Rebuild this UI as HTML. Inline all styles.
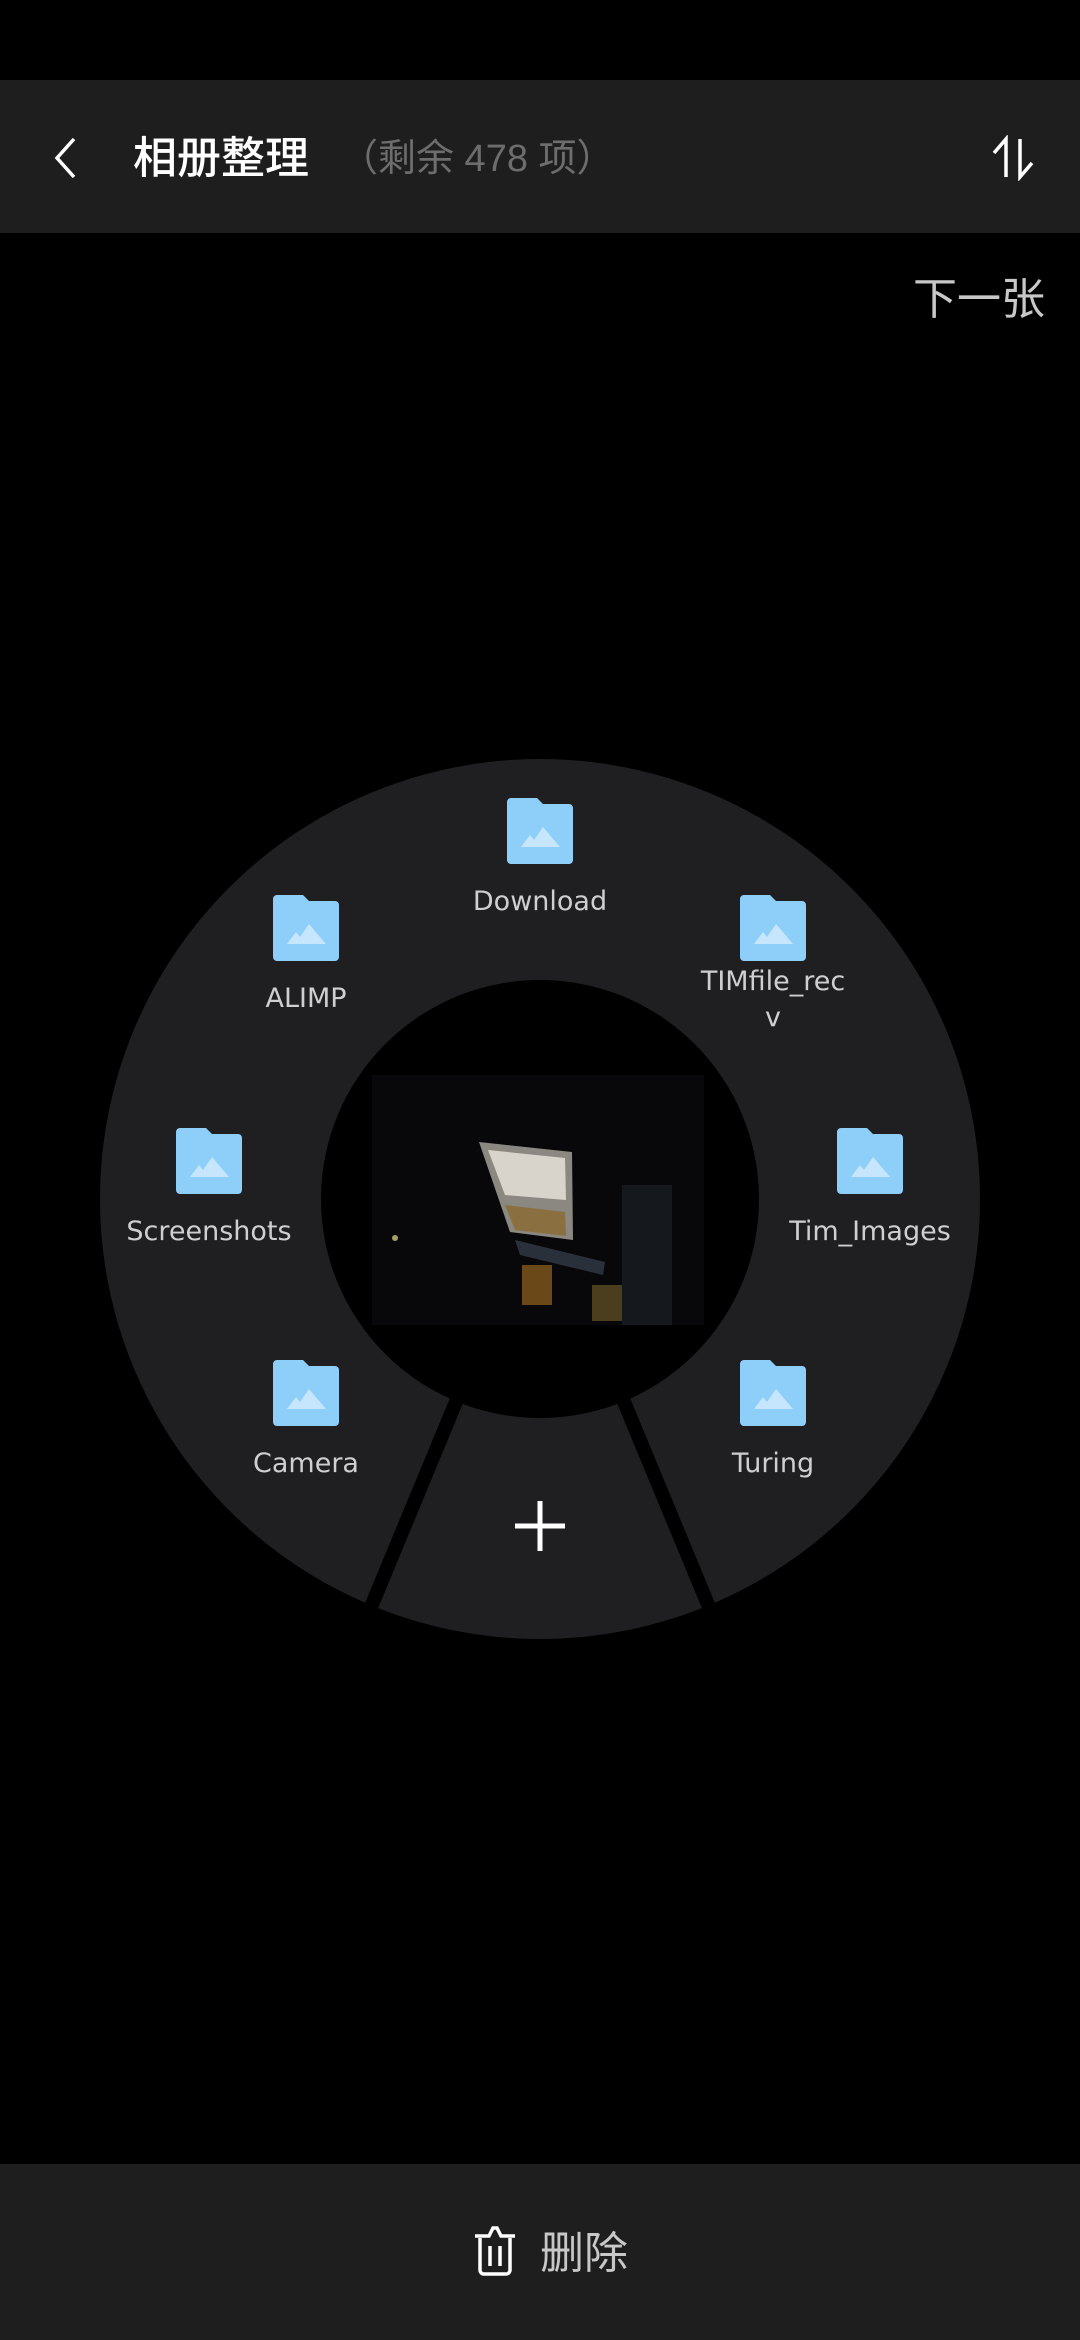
<!DOCTYPE html>
<html><head><meta charset="utf-8">
<style>
html,body{margin:0;padding:0;background:#000;}
body{width:1080px;height:2340px;position:relative;overflow:hidden;font-family:"Liberation Sans","Noto Sans CJK SC",sans-serif;}
.hdr{position:absolute;left:0;top:80px;width:1080px;height:153px;background:#1e1e1f;}
.t{position:absolute;white-space:nowrap;line-height:1;}
.bot{position:absolute;left:0;top:2164px;width:1080px;height:176px;background:#1e1e1f;}
.lbl{position:absolute;width:240px;text-align:center;color:#cfcfd0;font-size:27px;line-height:36px;font-family:"DejaVu Sans","Liberation Sans",sans-serif;}
.fd{position:absolute;width:66px;height:66px;}
</style></head><body>
<div class="hdr">
  <svg style="position:absolute;left:52px;top:57px" width="26" height="42" viewBox="0 0 26 42"><path d="M22 2 L5 21 L22 40" fill="none" stroke="#fff" stroke-width="3.5"/></svg>
  <div class="t" style="left:133px;top:52px;font-size:44px;color:#fff;font-weight:500;font-family:'Noto Sans CJK SC',sans-serif;">相册整理</div>
  <div class="t" style="left:340px;top:60px;font-size:38px;color:#6d6d6d;">（剩余 478 项）</div>
  <svg style="position:absolute;left:990px;top:55px" width="46" height="46" viewBox="0 0 46 46"><path d="M16 42 V4 L4 18 M30 4 V42 L42 28" fill="none" stroke="#fff" stroke-width="3.5"/></svg>
</div>
<div class="t" style="left:913px;top:278px;font-size:44px;color:#c8c8c8;">下一张</div>

<svg style="position:absolute;left:0;top:0" width="1080" height="2340">
  <circle cx="540" cy="1199" r="440" fill="#1f1f21"/>
  <line x1="540" y1="1199" x2="366" y2="1619" stroke="#000" stroke-width="14"/>
  <line x1="540" y1="1199" x2="714" y2="1619" stroke="#000" stroke-width="14"/>
  <circle cx="540" cy="1199" r="219" fill="#000"/>
  <rect x="372" y="1075" width="332" height="250" fill="#08080a"/>
  <polygon points="479,1142 572,1152 573,1240 510,1232" fill="#8a8880"/>
  <polygon points="488,1150 565,1158 566,1200 505,1195" fill="#d8d4cc"/>
  <polygon points="505,1205 565,1212 566,1236 515,1230" fill="#8a7040"/>
  <polygon points="515,1240 605,1262 603,1275 520,1255" fill="#2a303a"/>
  <rect x="522" y="1265" width="30" height="40" fill="#6a4818"/>
  <rect x="592" y="1285" width="35" height="36" fill="#4a3e1e"/>
  <rect x="622" y="1185" width="50" height="140" fill="#15181c"/>
  <circle cx="395" cy="1238" r="3" fill="#a8a060"/>
  <path d="M515 1526 H565 M540 1501 V1551" stroke="#fff" stroke-width="5"/>
</svg>

<svg width="0" height="0" style="position:absolute"><defs><g id="f"><path d="M4 0 H30 L36 6 H62 a4 4 0 0 1 4 4 V62 a4 4 0 0 1 -4 4 H4 a4 4 0 0 1 -4 -4 V4 a4 4 0 0 1 4 -4Z" fill="#8ecff9"/><path d="M14 49 L23 37 L27 42 L36 29 L53 49 Z" fill="#c5e6fc"/></g></defs></svg>
<svg class="fd" style="left:507px;top:798px" viewBox="0 0 66 66"><use href="#f"/></svg>
<svg class="fd" style="left:273px;top:895px" viewBox="0 0 66 66"><use href="#f"/></svg>
<svg class="fd" style="left:740px;top:895px" viewBox="0 0 66 66"><use href="#f"/></svg>
<svg class="fd" style="left:176px;top:1128px" viewBox="0 0 66 66"><use href="#f"/></svg>
<svg class="fd" style="left:837px;top:1128px" viewBox="0 0 66 66"><use href="#f"/></svg>
<svg class="fd" style="left:273px;top:1360px" viewBox="0 0 66 66"><use href="#f"/></svg>
<svg class="fd" style="left:740px;top:1360px" viewBox="0 0 66 66"><use href="#f"/></svg>

<div class="lbl" style="left:420px;top:884px">Download</div>
<div class="lbl" style="left:186px;top:981px">ALIMP</div>
<div class="lbl" style="left:653px;top:964px">TIMfile_rec<br>v</div>
<div class="lbl" style="left:89px;top:1214px">Screenshots</div>
<div class="lbl" style="left:750px;top:1214px">Tim_Images</div>
<div class="lbl" style="left:186px;top:1446px">Camera</div>
<div class="lbl" style="left:653px;top:1446px">Turing</div>

<div class="bot">
  <svg style="position:absolute;left:472px;top:60px" width="46" height="54" viewBox="0 0 46 54"><path d="M3 12 H17 L21 4 H25 L29 12 H43" fill="none" stroke="#fff" stroke-width="3.5"/><path d="M8 14 V46 a4 4 0 0 0 4 4 H34 a4 4 0 0 0 4 -4 V14 M18 22 V42 M28 22 V42" fill="none" stroke="#fff" stroke-width="3.5"/></svg>
  <div class="t" style="left:540px;top:68px;font-size:44px;color:#c8c8c8;">删除</div>
</div>
</body></html>
